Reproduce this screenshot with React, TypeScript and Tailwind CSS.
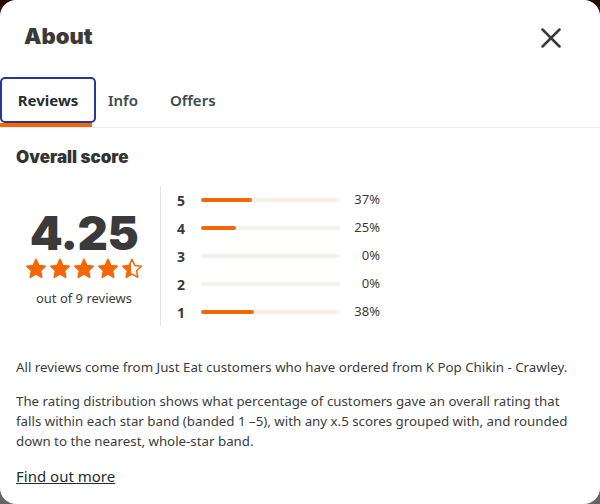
import { X } from "lucide-react";

const bands = [
  { star: 5, pct: 37 },
  { star: 4, pct: 25 },
  { star: 3, pct: 0 },
  { star: 2, pct: 0 },
  { star: 1, pct: 38 },
];

const STAR =
  "M12 1.5l3.09 6.6 7.16.86-5.28 4.93 1.38 7.11L12 17.5l-6.35 3.5 1.38-7.11L1.75 8.96l7.16-.86L12 1.5z";

function Star({ fill }: { fill: number }) {
  return (
    <svg viewBox="0 0 24 24" className="h-[22px] w-[22px]">
      <defs>
        <clipPath id={`clip-${fill}`}>
          <rect x="0" y="0" width={24 * fill} height="24" />
        </clipPath>
      </defs>
      <path d={STAR} fill="none" stroke="#f36805" strokeWidth="1.6" strokeLinejoin="round" />
      <path d={STAR} fill="#f36805" clipPath={`url(#clip-${fill})`} />
    </svg>
  );
}

export default function App() {
  return (
    <div className="h-[504px] w-[600px] bg-gradient-to-b from-[#2a0c06] via-[#4a3a36] to-[#666] font-['Noto_Sans',sans-serif]">
      <div className="flex h-full flex-col rounded-[16px] bg-white text-[#242e30]">
        <div className="flex h-[77px] items-start justify-between px-6">
          <h2 className="mt-[22px] font-['Inter',sans-serif] text-[22px] font-black leading-7 text-[#3a3a3a]">
            About
          </h2>
          <button type="button" className="mr-[8px] mt-[21px] text-[#3a3a3a]">
            <X size={34} strokeWidth={1.8} />
          </button>
        </div>

        <div className="flex items-stretch border-b border-[#ececec]">
          <div className="relative">
            <button
              type="button"
              className="h-[46px] w-[96px] rounded-[5px] border-2 border-[#2b3595] text-[15px] font-bold text-[#242e30]"
            >
              Reviews
            </button>
            <div className="h-[4px] w-[92px] bg-[#f36805]" />
          </div>
          <button type="button" className="h-[46px] px-3 text-[15px] font-semibold text-[#3c4a4f]">
            Info
          </button>
          <button type="button" className="h-[46px] px-5 text-[15px] font-semibold text-[#3c4a4f]">
            Offers
          </button>
        </div>

        <div className="px-4 pt-[17px]">
          <h3 className="font-['Inter',sans-serif] text-[17px] font-black leading-6 text-[#333]">
            Overall score
          </h3>

          <div className="mt-[17px] flex">
            <div className="flex w-[144px] flex-col items-center pr-[8px] pt-[23px]">
              <div className="font-['Inter',sans-serif] text-[47px] font-black leading-[48px] tracking-[-0.5px] text-[#3a3a3a]">
                4.25
              </div>
              <div className="mt-[1px] flex gap-[2px]">
                <Star fill={1} />
                <Star fill={1} />
                <Star fill={1} />
                <Star fill={1} />
                <Star fill={0.45} />
              </div>
              <div className="mt-[9px] text-[13px] leading-[18px] text-[#3c3c3c]">out of 9 reviews</div>
            </div>

            <div className="flex flex-col border-l border-[#e4e4e4] pl-4">
              {bands.map((b) => (
                <div key={b.star} className="flex h-[28px] items-center">
                  <span className="w-[24px] text-[14px] font-bold text-[#3a3a3a]">{b.star}</span>
                  <div className="h-[4px] w-[139px] rounded-full bg-[#f5f1ec]">
                    <div className="h-full rounded-full bg-[#f36805]" style={{ width: `${b.pct}%` }} />
                  </div>
                  <span className="w-[40px] text-right text-[13px] text-[#3c3c3c]">{b.pct}%</span>
                </div>
              ))}
            </div>
          </div>

          <p className="mt-[31px] text-[13.3px] leading-5 text-[#3c3c3c]">
            All reviews come from Just Eat customers who have ordered from K Pop Chikin - Crawley.
          </p>
          <p className="mt-[14px] text-[13.3px] leading-5 text-[#3c3c3c]">
            The rating distribution shows what percentage of customers gave an overall rating that
            falls within each star band (banded 1 –5), with any x.5 scores grouped with, and rounded
            down to the nearest, whole-star band.
          </p>
          <a href="#" className="mt-[15px] inline-block text-[15px] leading-5 text-[#242e30] underline">
            Find out more
          </a>
        </div>
      </div>
    </div>
  );
}
